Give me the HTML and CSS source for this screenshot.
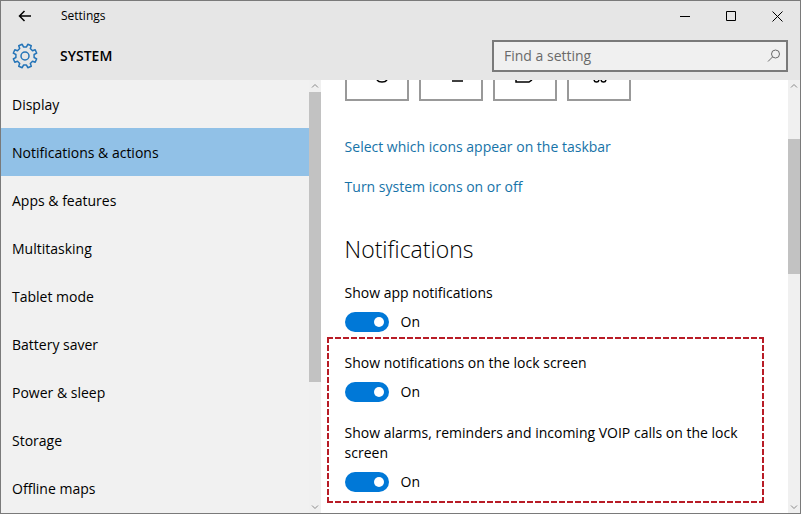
FILE: index.html
```html
<!DOCTYPE html>
<html lang="en">
<head>
    <meta charset="UTF-8">
    <meta name="viewport" content="width=device-width, initial-scale=1.0">
    <title>Settings</title>
    <link rel="stylesheet" href="styles.css">
</head>
<body>
    <div class="window">
        <div class="titlebar">
            <button class="back-button" aria-label="Back">
                <svg width="14" height="12" viewBox="0 0 14 12"><path d="M13 6H1.5M6.5 1L1.5 6l5 5"/></svg>
            </button>
            <span class="window-title">Settings</span>
            <div class="window-buttons">
                <button aria-label="Minimize"><svg width="11" height="11" viewBox="0 0 11 11"><path d="M0 5.5h10"/></svg></button>
                <button aria-label="Maximize"><svg width="11" height="11" viewBox="0 0 11 11"><path d="M.5.5h9v9h-9z"/></svg></button>
                <button aria-label="Close"><svg width="11" height="11" viewBox="0 0 11 11"><path d="M.5.5l10 10M10.5.5l-10 10"/></svg></button>
            </div>
        </div>

        <header class="header">
            <svg class="gear" width="26" height="26" viewBox="-13 -13 26 26">
                <path d="M9.1 1.500L11.700 2.800L10.200 6.300L7.500 5.300L5.300 7.500L6.300 10.200L2.800 11.700L1.500 9.100H-1.500L-2.800 11.700L-6.300 10.200L-5.300 7.500L-7.500 5.300L-10.200 6.300L-11.700 2.800L-9.100 1.500V-1.500L-11.700 -2.800L-10.200 -6.300L-7.500 -5.300L-5.300 -7.500L-6.300 -10.200L-2.800 -11.700L-1.500 -9.100H1.500L2.800 -11.700L6.300 -10.200L5.300 -7.500L7.500 -5.300L10.200 -6.300L11.700 -2.800L9.100 -1.500Z"/>
                <circle r="4"/>
            </svg>
            <h1>SYSTEM</h1>
            <div class="search">
                <input type="text" placeholder="Find a setting" aria-label="Find a setting">
                <svg width="14" height="14" viewBox="0 0 14 14"><circle cx="8.5" cy="5" r="4"/><path d="M5.6 7.9L1 12.5"/></svg>
            </div>
        </header>

        <div class="panes">
            <div class="sidebar">
                <nav>
                    <a href="#">Display</a>
                    <a href="#" class="selected">Notifications &amp; actions</a>
                    <a href="#">Apps &amp; features</a>
                    <a href="#">Multitasking</a>
                    <a href="#">Tablet mode</a>
                    <a href="#">Battery saver</a>
                    <a href="#">Power &amp; sleep</a>
                    <a href="#">Storage</a>
                    <a href="#">Offline maps</a>
                </nav>
                <div class="scrollbar">
                    <svg width="12" height="12" viewBox="0 0 12 12"><path d="M3 7.5l3-3 3 3"/></svg>
                    <div class="track"><div class="thumb nav-thumb"></div></div>
                    <svg width="12" height="12" viewBox="0 0 12 12"><path d="M3 4.5l3 3 3-3"/></svg>
                </div>
            </div>

            <main>
                <div class="content">
                    <div class="tiles">
                        <button aria-label="Tablet mode"><svg width="24" height="6" viewBox="0 0 24 6"><path d="M12 0Q13.500 2 17 2T22 0"/></svg></button>
                        <button aria-label="Connect"><svg width="24" height="6" viewBox="0 0 24 6"><path d="M13 1h11"/></svg></button>
                        <button aria-label="Note"><svg width="24" height="6" viewBox="0 0 24 6"><path d="M3 0v2h13l3-2"/></svg></button>
                        <button aria-label="All settings"><svg width="24" height="6" viewBox="0 0 24 6"><path d="M7 0q.5 2 2.500 2T12 0M14 0q.5 2 2.500 2T19 0"/></svg></button>
                    </div>
                    <a class="link" href="#">Select which icons appear on the taskbar</a>
                    <a class="link" href="#">Turn system icons on or off</a>

                    <h2>Notifications</h2>
                    <div class="setting">
                        <label for="appNotifications">Show app notifications</label>
                        <div class="toggle"><input type="checkbox" id="appNotifications" checked><span>On</span></div>
                    </div>
                    <div class="highlight">
                        <div class="setting">
                            <label for="lockNotifications">Show notifications on the lock screen</label>
                            <div class="toggle"><input type="checkbox" id="lockNotifications" checked><span>On</span></div>
                        </div>
                        <div class="setting">
                            <label for="lockAlarms">Show alarms, reminders and incoming VOIP calls on the lock screen</label>
                            <div class="toggle"><input type="checkbox" id="lockAlarms" checked><span>On</span></div>
                        </div>
                    </div>
                </div>
                <div class="scrollbar">
                    <svg width="12" height="12" viewBox="0 0 12 12"><path d="M3 7.5l3-3 3 3"/></svg>
                    <div class="track"><div class="thumb main-thumb"></div></div>
                    <svg width="12" height="12" viewBox="0 0 12 12"><path d="M3 4.5l3 3 3-3"/></svg>
                </div>
            </main>
        </div>
    </div>
</body>
</html>
```

FILE: styles.css
```css
:root {
    --chrome: #e6e6e6;
    --sidebar: #f1f1f1;
    --selected: #91c1e7;
    --accent: #0078d7;
    --link: #1673a8;
    --border: #7a7a7a;
    --dash: #b81c26;
}

* {
    box-sizing: border-box;
}
body {
    margin: 0;
    font-family: 'Open Sans', 'Noto Sans', sans-serif;
    font-size: 14px;
    line-height: 20px;
    color: #000000;
}
button {
    padding: 0;
    border: none;
    background: none;
    font: inherit;
}
svg {
    display: block;
    fill: none;
    stroke: #000000;
}
a {
    text-decoration: none;
}
.window {
    display: flex;
    flex-direction: column;
    height: 100vh;
    overflow: hidden;
    border: 1px solid var(--border);
    background: #ffffff;
}

/* title bar */
.titlebar {
    display: flex;
    align-items: center;
    flex: none;
    height: 30px;
    background: var(--chrome);
}
.back-button {
    display: flex;
    align-items: center;
    justify-content: center;
    width: 48px;
    height: 30px;
}
.back-button svg {
    stroke-width: 1.5;
}
.window-title {
    padding-left: 12px;
    font-size: 12px;
}
.window-buttons {
    display: flex;
    margin-left: auto;
}
.window-buttons button {
    display: flex;
    align-items: center;
    justify-content: center;
    width: 46px;
    height: 30px;
}

/* header */
.header {
    display: flex;
    align-items: center;
    flex: none;
    height: 49px;
    padding: 0 12px 0 11px;
    background: var(--chrome);
}
.gear {
    stroke: #2474b8;
    stroke-width: 1.5;
    stroke-linejoin: round;
}
h1 {
    margin: 0 0 0 22px;
    font-size: 14px;
    font-weight: 600;
}
.search {
    display: flex;
    align-items: center;
    width: 296px;
    height: 32px;
    margin-left: auto;
    padding: 0 5px 0 10px;
    border: 2px solid var(--border);
    background: #f0f0f0;
}
.search input {
    flex: 1;
    min-width: 0;
    padding: 0;
    border: none;
    outline: none;
    background: none;
    font: inherit;
}
.search input::placeholder {
    color: #6a6a6a;
}
.search svg {
    stroke: #6a6a6a;
}

/* panes */
.panes {
    display: flex;
    flex: 1;
    min-height: 0;
}
.sidebar {
    display: flex;
    flex: none;
    width: 40%;
    background: var(--sidebar);
}
nav {
    flex: 1;
    overflow: hidden;
}
nav a {
    display: block;
    padding: 15px 11px 13px;
    color: #000000;
}
nav a.selected {
    background: var(--selected);
}
.scrollbar {
    display: flex;
    flex-direction: column;
    flex: none;
    width: 12px;
    background: #f0f0f0;
}
.scrollbar svg {
    flex: none;
    stroke: #8a8a8a;
}
.track {
    flex: 1;
}
.thumb {
    background: #c2c2c2;
}
.nav-thumb {
    height: 71%;
}
.main-thumb {
    height: 33%;
    margin-top: 47px;
}
main {
    display: flex;
    flex: 1;
    min-width: 0;
}
.content {
    flex: 1;
    overflow: hidden;
    padding: 0 24px;
}

/* quick actions, scrolled mostly out of view */
.tiles {
    display: flex;
    gap: 10px;
    margin-bottom: 36px;
}
.tiles button {
    display: flex;
    justify-content: center;
    width: 64px;
    height: 21px;
    border: 2px solid #999999;
    border-top: none;
}
.tiles svg {
    stroke-width: 1.5;
}
.link {
    display: block;
    margin-bottom: 20px;
    color: var(--link);
}
h2 {
    margin: 36px 0 18px;
    font-size: 23px;
    font-weight: 300;
    line-height: 32px;
}
.setting label {
    display: block;
    margin-bottom: 9px;
}
.toggle {
    display: flex;
    align-items: center;
    gap: 12px;
}
.toggle input {
    display: flex;
    align-items: center;
    justify-content: flex-end;
    appearance: none;
    width: 44px;
    height: 20px;
    margin: 0;
    padding: 5px;
    border-radius: 10px;
    background: var(--accent);
}
.toggle input::before {
    content: '';
    width: 10px;
    height: 10px;
    border-radius: 50%;
    background: #ffffff;
}
.toggle input:not(:checked) {
    justify-content: flex-start;
    background: #999999;
}
.highlight {
    display: flex;
    flex-direction: column;
    gap: 21px;
    margin: 5px 0 0 -18px;
    padding: 16px 18px 11px;
    background:
        repeating-linear-gradient(90deg, var(--dash) 0 6px, transparent 6px 8px) top / 100% 2px no-repeat,
        repeating-linear-gradient(90deg, var(--dash) 0 6px, transparent 6px 8px) bottom / 100% 2px no-repeat,
        repeating-linear-gradient(var(--dash) 0 6px, transparent 6px 8px) left / 2px 100% no-repeat,
        repeating-linear-gradient(var(--dash) 0 6px, transparent 6px 8px) right / 2px 100% no-repeat;
}
```
